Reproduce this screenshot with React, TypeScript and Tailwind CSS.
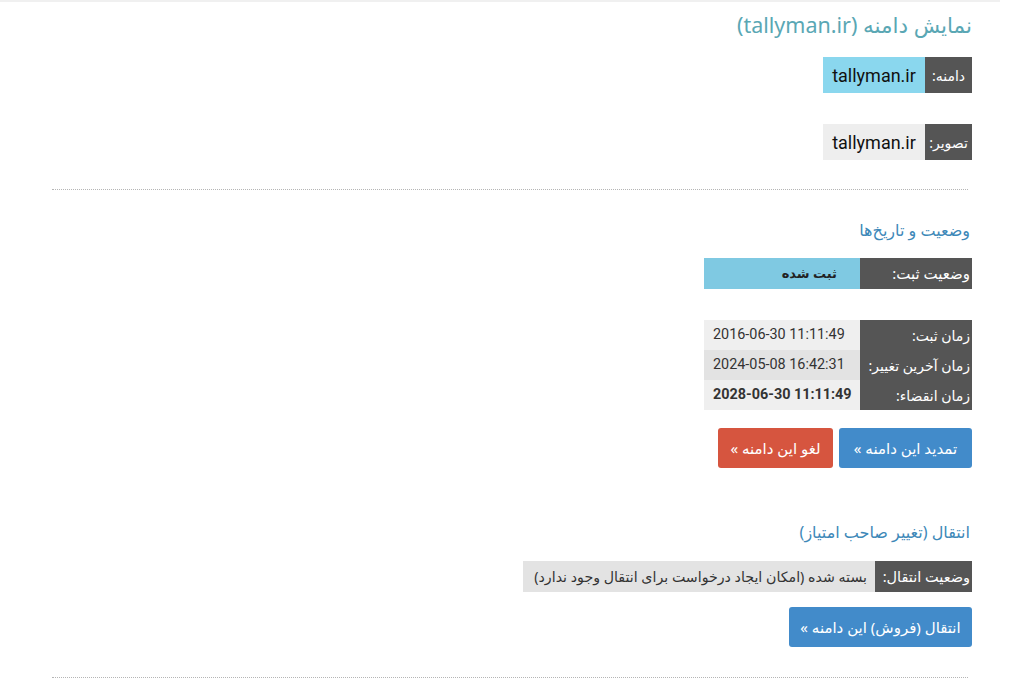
import React from 'react';

const font = { fontFamily: '"Noto Sans", "DejaVu Sans", Roboto, sans-serif' };

export default function App() {
  return (
    <div dir="rtl" className="min-h-[695px] bg-white text-[#333]" style={font}>
      <div className="border-t-2 border-[#f0f0f0] mr-[24px] pl-[52px] pr-[28px]">
        {/* title */}
        <h1 className="pt-[7px] h-[48px] text-[21.5px] leading-[32px] text-[#5aa7b4] font-normal">
          نمایش دامنه (tallyman.ir)
        </h1>

        <div className="mt-[7px] flex">
          <span className="h-[36px] w-[47px] bg-[#555] text-white text-[14px] flex items-center justify-center">دامنه:</span>
          <span className="h-[36px] w-[102px] bg-[#8ad7ee] text-[#111] text-[18px] flex items-center justify-center" style={{ fontFamily: 'Roboto, sans-serif' }}>tallyman.ir</span>
        </div>

        <div className="mt-[31px] flex">
          <span className="h-[36px] w-[47px] bg-[#555] text-white text-[14px] flex items-center justify-center">تصویر:</span>
          <span className="h-[36px] w-[102px] bg-[#eeeeee] text-[#111] text-[18px] flex items-center justify-center" style={{ fontFamily: 'Roboto, sans-serif' }}>tallyman.ir</span>
        </div>

        <div className="mt-[29px] mr-[4px] border-t border-dotted border-[#b5b5b5]" />

        {/* status & dates */}
        <h2 className="mt-[29px] mr-[2px] text-[16px] leading-[22px] text-[#3d88b8] font-normal">وضعیت و تاریخ‌ها</h2>

        <div className="mt-[17px] flex">
          <span className="h-[31px] w-[112px] bg-[#555] text-white text-[15px] flex items-center pr-[2px]">وضعیت ثبت:</span>
          <span className="h-[31px] w-[156px] bg-[#7fc9e2] text-[#222] text-[13px] font-bold flex items-center pr-[23px]">ثبت شده</span>
        </div>

        <div className="mt-[31px] flex">
          <div className="w-[112px] bg-[#555] text-white text-[14px]">
            <div className="h-[30px] flex items-center pr-[2px]">زمان ثبت:</div>
            <div className="h-[30px] flex items-center pr-[2px]">زمان آخرین تغییر:</div>
            <div className="h-[30px] flex items-center pr-[2px]">زمان انقضاء:</div>
          </div>
          <div className="w-[156px] text-[14.4px] text-[#333]" style={{ fontFamily: 'Roboto, sans-serif' }}>
            <div dir="ltr" className="h-[30px] bg-[#efefef] flex items-center pl-[9px]">2016-06-30 11:11:49</div>
            <div dir="ltr" className="h-[30px] bg-[#e3e3e3] flex items-center pl-[9px]">2024-05-08 16:42:31</div>
            <div dir="ltr" className="h-[30px] bg-[#efefef] flex items-center pl-[9px] font-bold">2028-06-30 11:11:49</div>
          </div>
        </div>

        <div className="mt-[18px] flex gap-[6px]">
          <button className="h-[40px] w-[133px] rounded-[3px] bg-[#428bca] text-white text-[15px]">تمدید این دامنه »</button>
          <button className="h-[40px] w-[115px] rounded-[3px] bg-[#d6553f] text-white text-[15px]">لغو این دامنه »</button>
        </div>

        {/* transfer */}
        <h2 className="mt-[53px] mr-[2px] text-[16px] leading-[22px] text-[#3d88b8] font-normal">انتقال (تغییر صاحب امتیاز)</h2>

        <div className="mt-[18px] flex">
          <span className="h-[31px] w-[97px] bg-[#555] text-white text-[14.5px] flex items-center pr-[2px]">وضعیت انتقال:</span>
          <span className="h-[31px] w-[352px] bg-[#e3e3e3] text-[#333] text-[14.2px] flex items-center pr-[8px]">بسته شده (امکان ایجاد درخواست برای انتقال وجود ندارد)</span>
        </div>

        <button className="mt-[15px] h-[40px] w-[183px] rounded-[3px] bg-[#428bca] text-white text-[15px]">انتقال (فروش) این دامنه »</button>

        <div className="mt-[30px] mr-[4px] border-t border-dotted border-[#b5b5b5]" />
      </div>
    </div>
  );
}
